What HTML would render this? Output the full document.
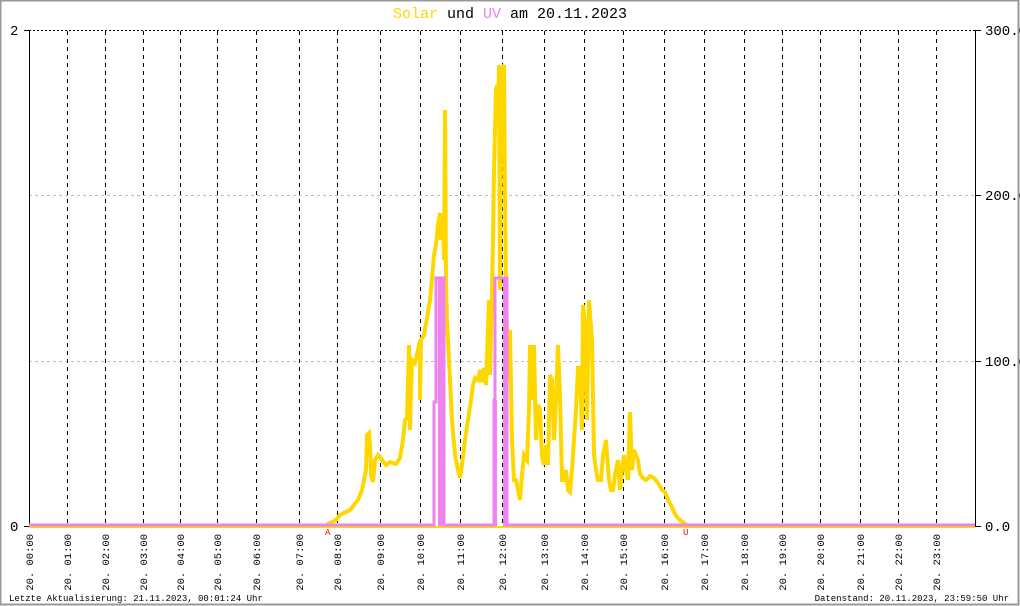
<!DOCTYPE html>
<html><head><meta charset="utf-8"><style>
html,body{margin:0;padding:0;background:#fff;}
svg{display:block;}
text{font-family:"Liberation Mono","DejaVu Sans Mono",monospace;}
</style></head><body>
<svg width="1020" height="606" viewBox="0 0 1020 606" xmlns="http://www.w3.org/2000/svg">
<rect x="0" y="0" width="1020" height="606" fill="#fff"/>
<rect x="0.5" y="0.5" width="1018" height="604" fill="none" stroke="#999" stroke-width="2"/>
<text x="510" y="18" font-size="15" text-anchor="middle"><tspan fill="#ffd700">Solar</tspan><tspan fill="#000"> und </tspan><tspan fill="#ee82ee">UV</tspan><tspan fill="#000"> am 20.11.2023</tspan></text>
<line x1="29" y1="30.5" x2="975" y2="30.5" stroke="#000" stroke-dasharray="2,2"/>
<line x1="29" y1="195.5" x2="975" y2="195.5" stroke="#bbb" stroke-dasharray="3,3"/>
<line x1="29" y1="361.5" x2="975" y2="361.5" stroke="#bbb" stroke-dasharray="3,3"/>
<g stroke="#000" stroke-dasharray="4,4">
<line x1="67.5" y1="31" x2="67.5" y2="526"/><line x1="105.5" y1="31" x2="105.5" y2="526"/>
<line x1="143.5" y1="31" x2="143.5" y2="526"/><line x1="180.5" y1="31" x2="180.5" y2="526"/>
<line x1="217.5" y1="31" x2="217.5" y2="526"/><line x1="256.5" y1="31" x2="256.5" y2="526"/>
<line x1="299.5" y1="31" x2="299.5" y2="526"/><line x1="337.5" y1="31" x2="337.5" y2="526"/>
<line x1="380.5" y1="31" x2="380.5" y2="526"/><line x1="420.5" y1="31" x2="420.5" y2="526"/>
<line x1="460.5" y1="31" x2="460.5" y2="526"/><line x1="502.5" y1="31" x2="502.5" y2="526"/>
<line x1="544.5" y1="31" x2="544.5" y2="526"/><line x1="584.5" y1="31" x2="584.5" y2="526"/>
<line x1="623.5" y1="31" x2="623.5" y2="526"/><line x1="664.5" y1="31" x2="664.5" y2="526"/>
<line x1="704.5" y1="31" x2="704.5" y2="526"/><line x1="744.5" y1="31" x2="744.5" y2="526"/>
<line x1="782.5" y1="31" x2="782.5" y2="526"/><line x1="820.5" y1="31" x2="820.5" y2="526"/>
<line x1="860.5" y1="31" x2="860.5" y2="526"/><line x1="898.5" y1="31" x2="898.5" y2="526"/>
<line x1="936.5" y1="31" x2="936.5" y2="526"/>
</g>
<line x1="29.5" y1="30" x2="29.5" y2="527" stroke="#000"/>
<line x1="975.5" y1="30" x2="975.5" y2="527" stroke="#000"/>
<line x1="24" y1="30.5" x2="30" y2="30.5" stroke="#000"/>
<line x1="24" y1="526.5" x2="30" y2="526.5" stroke="#000"/>
<g stroke="#000"><line x1="975" y1="30.5" x2="981" y2="30.5"/><line x1="975" y1="195.5" x2="981" y2="195.5"/><line x1="975" y1="361.5" x2="981" y2="361.5"/><line x1="975" y1="526.5" x2="981" y2="526.5"/></g>
<g font-size="14" fill="#000">
<text x="10" y="35">2</text><text x="10" y="531">0</text>
<text x="985" y="35">300.0</text><text x="985" y="200">200.0</text><text x="985" y="366">100.0</text><text x="985" y="531">0.0</text>
</g>
<line x1="29" y1="527" x2="975" y2="527" stroke="#ffd700" stroke-width="2"/>
<polyline fill="none" stroke="#ffd700" stroke-width="4" stroke-linejoin="miter" points="29,526 326,526 328,524 336,520 340,515 350,510 358,500 362,490 366,470 367,435 369,433 370,445 371,475 373,482 375,460 378,455 382,460 386,465 390,462 396,464 400,458 403,440 405,420 407,418 408,380 409,345 410,430 411,390 412,360 415,363 418,350 420,340 420,400 421,340 424,335 427,318 430,300 432,278 434,255 436,245 438,225 440,213 441,240 443,215 444,260 445,110 446,280 447,320 450,380 452,420 455,455 458,470 460,478 462,465 465,440 468,420 471,400 473,385 475,378 478,380 480,370 482,382 484,368 486,385 489,300 490,375 492,290 493,240 494,170 495,130 496,90 497,85 498,120 499,65 500,290 501,80 502,70 504,65 505,200 506,290 507,330 509,380 510,330 512,440 514,480 516,480 518,490 520,500 522,475 524,455 527,460 529,410 530,345 532,400 534,345 536,440 538,405 540,410 542,457 544,465 546,445 548,465 550,375 552,380 554,440 556,400 558,345 560,395 562,480 564,480 566,470 568,490 570,492 572,470 574,440 576,410 578,368 580,368 582,430 583,305 585,325 587,420 589,300 592,340 594,455 596,470 598,480 601,480 603,455 606,440 609,480 611,490 613,490 615,475 618,460 620,490 622,470 624,455 626,470 628,480 630,412 632,470 634,450 636,455 638,460 640,474 643,478 646,480 650,476 654,478 658,483 662,490 665,492 668,500 671,505 674,512 677,517 680,520 684,523 688,526"/>
<polyline fill="none" stroke="#ee82ee" stroke-width="3" points="29,525 434,525 434,402 436,402 436,278 444,278 444,525 494,525 494,400 495,400 495,278 507,278 507,525 975,525"/>
<rect x="438" y="278" width="7" height="248" fill="#ee82ee"/>
<rect x="493" y="400" width="4" height="126" fill="#ee82ee"/>
<rect x="503" y="278" width="5" height="248" fill="#ee82ee"/>
<text x="325" y="535" font-size="9" fill="#f00">A</text>
<text x="683" y="535" font-size="9" fill="#f00">U</text>
<g font-size="10.5" fill="#000" text-anchor="end">
<text transform="translate(33,534) rotate(-90)">20. 00:00</text>
<text transform="translate(71,534) rotate(-90)">20. 01:00</text>
<text transform="translate(109,534) rotate(-90)">20. 02:00</text>
<text transform="translate(147,534) rotate(-90)">20. 03:00</text>
<text transform="translate(184,534) rotate(-90)">20. 04:00</text>
<text transform="translate(221,534) rotate(-90)">20. 05:00</text>
<text transform="translate(260,534) rotate(-90)">20. 06:00</text>
<text transform="translate(303,534) rotate(-90)">20. 07:00</text>
<text transform="translate(341,534) rotate(-90)">20. 08:00</text>
<text transform="translate(384,534) rotate(-90)">20. 09:00</text>
<text transform="translate(424,534) rotate(-90)">20. 10:00</text>
<text transform="translate(464,534) rotate(-90)">20. 11:00</text>
<text transform="translate(506,534) rotate(-90)">20. 12:00</text>
<text transform="translate(548,534) rotate(-90)">20. 13:00</text>
<text transform="translate(588,534) rotate(-90)">20. 14:00</text>
<text transform="translate(627,534) rotate(-90)">20. 15:00</text>
<text transform="translate(668,534) rotate(-90)">20. 16:00</text>
<text transform="translate(708,534) rotate(-90)">20. 17:00</text>
<text transform="translate(748,534) rotate(-90)">20. 18:00</text>
<text transform="translate(786,534) rotate(-90)">20. 19:00</text>
<text transform="translate(824,534) rotate(-90)">20. 20:00</text>
<text transform="translate(864,534) rotate(-90)">20. 21:00</text>
<text transform="translate(902,534) rotate(-90)">20. 22:00</text>
<text transform="translate(940,534) rotate(-90)">20. 23:00</text>
</g>
<text x="9" y="601" font-size="9" fill="#000">Letzte Aktualisierung: 21.11.2023, 00:01:24 Uhr</text>
<text x="1009" y="601" font-size="9" fill="#000" text-anchor="end">Datenstand: 20.11.2023, 23:59:50 Uhr</text>
</svg>
</body></html>
